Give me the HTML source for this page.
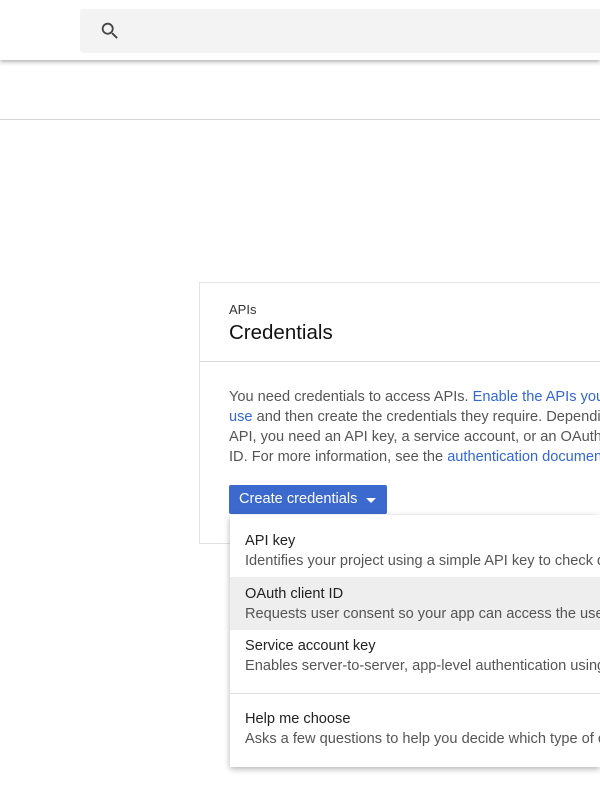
<!DOCTYPE html><html><head><style>
*{margin:0;padding:0;box-sizing:border-box}
html{overflow:hidden;width:600px;height:800px}
body{width:600px;height:800px;overflow:hidden;background:#fff;font-family:"Liberation Sans",sans-serif;position:relative}
.hdr{position:absolute;left:0;top:0;width:600px;height:60px;background:#fff;box-shadow:0 2px 4px rgba(0,0,0,.3);overflow:hidden}
.search{position:absolute;left:80px;top:9px;width:520px;height:44px;background:#f3f3f3;border-radius:3px 0 0 3px}
.line{position:absolute;left:0;top:119px;width:600px;height:1px;background:#d6d6d6}
.card{position:absolute;left:199px;top:282px;width:401px;height:262px;border:1px solid #e2e2e2;border-right:none;background:#fff;overflow:hidden}
.ch{height:79px;border-bottom:1px solid #dadada}
.t1{position:absolute;left:29px;top:19px;font-size:13px;color:#333}
.t2{position:absolute;left:29px;top:38px;font-size:20.5px;color:#111}
.body{position:absolute;left:29px;top:104px;width:400px;font-size:14.6px;line-height:20px;color:#555;white-space:nowrap}
.body a{color:#3367d6;text-decoration:none}
.btn{position:absolute;left:229px;top:485px;width:158px;height:29px;background:#3b69cd;border-radius:2px;color:#fff;font-size:14.6px;padding:6px 0 0 10px;white-space:nowrap}
.tri{position:absolute;left:137px;top:13px;border-left:5px solid transparent;border-right:5px solid transparent;border-top:5px solid #fff}
.menu{position:absolute;left:230px;top:515px;width:370px;height:252px;background:#fff;box-shadow:0 2px 6px rgba(0,0,0,.3);overflow:hidden}
.it{position:absolute;left:0;width:400px;height:52px;padding:16px 0 0 15px;white-space:nowrap}
.it b{display:block;font-weight:normal;font-size:14.6px;color:#222;line-height:20px}
.it span{display:block;font-size:14.6px;color:#555;line-height:20px}
</style></head><body>
<div class="hdr"><div class="search"><svg style="position:absolute;left:19px;top:11px" width="22" height="22" viewBox="0 0 24 24"><path fill="#444" d="M15.5 14h-.79l-.28-.27A6.47 6.47 0 0 0 16 9.5 6.5 6.5 0 1 0 9.5 16c1.610 0 3.09-.59 4.23-1.570l.27.28v.79l5 4.99L20.49 19l-4.99-5zm-6 0C7.01 14 5 11.99 5 9.5S7.01 5 9.5 5 14 7.01 14 9.5 11.99 14 9.5 14z"/></svg></div></div>
<div class="line"></div>
<div class="card"><div class="ch"></div><div class="t1">APIs</div><div class="t2">Credentials</div>
<div class="body">You need credentials to access APIs. <a>Enable the APIs you plan to</a><br><a>use</a> and then create the credentials they require. Depending on the<br>API, you need an API key, a service account, or an OAuth 2.0 client<br>ID. For more information, see the <a>authentication documentation</a>.</div></div>
<div class="btn">Create credentials<div class="tri"></div></div>
<div class="menu">
<div class="it" style="top:0"><b>API key</b><span>Identifies your project using a simple API key to check quota</span></div>
<div class="it" style="top:62px;height:53px;background:#eee;padding-top:7px"><b>OAuth client ID</b><span>Requests user consent so your app can access the user's data</span></div>
<div class="it" style="top:115px;padding-top:6px"><b>Service account key</b><span>Enables server-to-server, app-level authentication using robot accounts</span></div>
<div style="position:absolute;left:0;top:178px;width:400px;height:1px;background:#ddd"></div>
<div class="it" style="top:179px;padding-top:15px"><b>Help me choose</b><span>Asks a few questions to help you decide which type of credential to use</span></div>
</div>
</body></html>
